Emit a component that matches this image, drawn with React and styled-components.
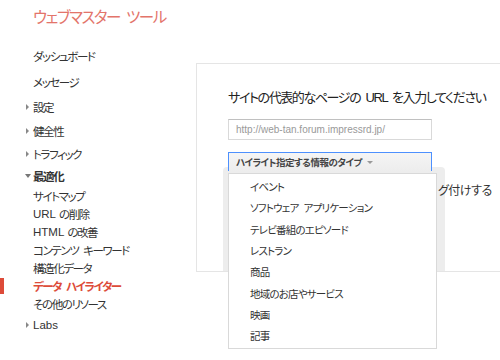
import React from "react";
import styled, { createGlobalStyle } from "styled-components";

const GlobalStyle = createGlobalStyle`
  html, body {
    margin: 0;
    padding: 0;
    background: #fff;
    overflow: hidden;
  }
  body {
    font-family: "Liberation Sans", "Noto Sans CJK JP", sans-serif;
    font-feature-settings: "palt";
    color: #333;
  }
`;

const Page = styled.div`
  width: 500px;
  height: 360px;
  position: relative;
  overflow: hidden;
`;

const Header = styled.div`
  height: 32px;
  padding-left: 33px;
  display: flex;
  align-items: center;
  font-size: 15.5px;
  color: #e3746a;
  letter-spacing: -1.4px;
  word-spacing: 3px;
`;

const Body = styled.div`
  display: flex;
  align-items: flex-start;
`;

const Sidebar = styled.nav`
  width: 196px;
  flex: none;
  padding-top: 11px;
  display: flex;
  flex-direction: column;
`;

const Item = styled.div`
  position: relative;
  height: ${(p) => p.$h || 18}px;
  margin-top: ${(p) => p.$mt || 0}px;
  display: flex;
  align-items: center;
  padding-left: 26px;
  font-size: 11.5px;
  letter-spacing: -1.4px;
  word-spacing: 3px;
  white-space: pre;
  color: ${(p) => (p.$active ? "#dd4b39" : "#333")};
  font-weight: ${(p) => (p.$bold || p.$active ? "bold" : "normal")};
  &::before {
    content: "";
    display: ${(p) => (p.$active ? "block" : "none")};
    position: absolute;
    left: 0;
    top: 1px;
    width: 4px;
    height: 16px;
    background: #dd4b39;
  }
`;

const Latin = styled.span`
  letter-spacing: 0;
  margin-right: 3px;
`;

const Arrow = styled.span`
  width: 7px;
  height: 8px;
  flex: none;
  display: flex;
  align-items: center;
  &::after {
    content: "";
    display: ${(p) => (p.$dir ? "block" : "none")};
    width: 0;
    height: 0;
    ${(p) =>
      p.$dir === "down"
        ? `border-left: 3px solid transparent;
           border-right: 3px solid transparent;
           border-top: 4px solid #777;
           margin-left: -1px;`
        : `border-top: 3px solid transparent;
           border-bottom: 3px solid transparent;
           border-left: 3px solid #888;`}
  }
`;

const Card = styled.section`
  margin-top: 31px;
  width: 304px;
  height: 209px;
  flex: none;
  border: 1px solid #e5e5e5;
  border-right: none;
  position: relative;
  padding: 24px 0 0 31px;
  box-sizing: border-box;
`;

const Title = styled.h2`
  margin: 0;
  height: 20px;
  line-height: 20px;
  font-size: 13px;
  font-weight: normal;
  color: #222;
  white-space: nowrap;
  letter-spacing: -1.4px;
  word-spacing: 3px;
`;

const UrlInput = styled.div`
  margin-top: 11px;
  width: 204px;
  height: 21px;
  box-sizing: border-box;
  border: 1px solid #d9d9d9;
  border-top-color: #c0c0c0;
  padding-left: 7px;
  display: flex;
  align-items: center;
  font-size: 10px;
  color: #999;
`;

const SelectWrap = styled.div`
  position: relative;
  margin-top: 12px;
  width: 204px;
`;

const SelectButton = styled.div`
  height: 19px;
  box-sizing: border-box;
  border: 1px solid #4d90fe;
  border-bottom: none;
  background: linear-gradient(#f5f5f5, #ededed);
  padding-left: 7px;
  display: flex;
  align-items: center;
  gap: 5px;
  font-size: 9.5px;
  font-weight: bold;
  letter-spacing: -0.5px;
  color: #444;
`;

const Caret = styled.span`
  width: 0;
  height: 0;
  border-left: 3px solid transparent;
  border-right: 3px solid transparent;
  border-top: 3px solid #999;
`;

const Shade = styled.div`
  position: absolute;
  left: 26px;
  top: 103px;
  width: 222px;
  bottom: 0;
  background: #ededed;
  border-radius: 4px 4px 0 0;
`;

const OptionRow = styled.div`
  position: relative;
  z-index: 1;
  margin-top: 10px;
  height: 16px;
  padding-left: 210px;
  display: flex;
  align-items: center;
  font-size: 12px;
  letter-spacing: -0.5px;
  color: #333;
  white-space: nowrap;
`;

const Menu = styled.ul`
  position: absolute;
  left: 0;
  top: 21px;
  width: 209px;
  margin: 0;
  padding: 2px 0;
  list-style: none;
  background: #fff;
  border: 1px solid #d9d9d9;
  box-sizing: border-box;
  z-index: 2;
`;

const MenuItem = styled.li`
  height: 21.3px;
  display: flex;
  align-items: center;
  padding-left: 21px;
  font-size: 10.5px;
  letter-spacing: -0.8px;
  word-spacing: 3px;
  white-space: pre;
  color: #333;
`;

const topItems = [
  { label: "ダッシュボード", h: 26 },
  { label: "メッセージ", h: 26 },
  { label: "設定", h: 24, arrow: "right" },
  { label: "健全性", h: 24, arrow: "right" },
  { label: "トラフィック", h: 22, arrow: "right" },
  { label: "最適化", h: 22, arrow: "down", bold: true },
];

const subItems = [
  { label: "サイトマップ" },
  { latin: "URL", label: "の削除" },
  { latin: "HTML", label: "の改善" },
  { label: "コンテンツ キーワード" },
  { label: "構造化データ" },
  { label: "データ ハイライター", active: true },
  { label: "その他のリソース" },
];

const types = [
  "イベント",
  "ソフトウェア アプリケーション",
  "テレビ番組のエピソード",
  "レストラン",
  "商品",
  "地域のお店やサービス",
  "映画",
  "記事",
];

export default function App() {
  return (
    <Page>
      <GlobalStyle />
      <Header>ウェブマスター ツール</Header>
      <Body>
        <Sidebar>
          {topItems.map((it) => (
            <Item key={it.label} $h={it.h} $bold={it.bold}>
              <Arrow $dir={it.arrow} />
              {it.label}
            </Item>
          ))}
          {subItems.map((s) => (
            <Item key={s.label} $active={s.active}>
              <Arrow />
              {s.latin && <Latin>{s.latin}</Latin>}
              {s.label}
            </Item>
          ))}
          <Item $h={22} $mt={1}>
            <Arrow $dir="right" />
            <Latin>Labs</Latin>
          </Item>
        </Sidebar>
        <Card>
          <Shade />
          <Title>サイトの代表的なページの URL を入力してください</Title>
          <UrlInput>http://web-tan.forum.impressrd.jp/</UrlInput>
          <SelectWrap>
            <SelectButton>
              ハイライト指定する情報のタイプ
              <Caret />
            </SelectButton>
            <Menu>
              {types.map((t) => (
                <MenuItem key={t}>{t}</MenuItem>
              ))}
            </Menu>
          </SelectWrap>
          <OptionRow>グ付けする</OptionRow>
        </Card>
      </Body>
    </Page>
  );
}
